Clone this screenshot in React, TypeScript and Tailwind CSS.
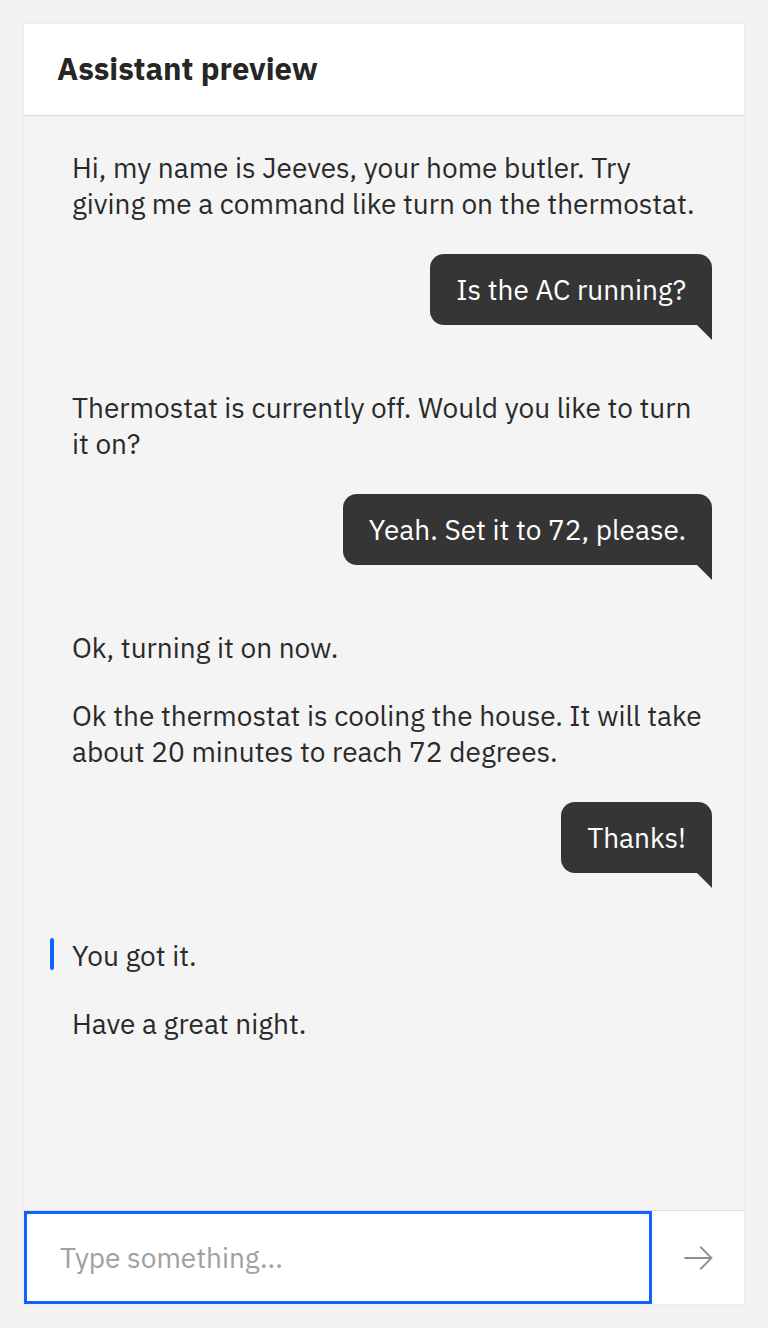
import React from "react";

type Msg = { from: "bot" | "user"; text: string; focus?: boolean };

const messages: Msg[] = [
  { from: "bot", text: "Hi, my name is Jeeves, your home butler. Try giving me a command like turn on the thermostat." },
  { from: "user", text: "Is the AC running?" },
  { from: "bot", text: "Thermostat is currently off. Would you like to turn it on?" },
  { from: "user", text: "Yeah. Set it to 72, please." },
  { from: "bot", text: "Ok, turning it on now." },
  { from: "bot", text: "Ok the thermostat is cooling the house. It will take about 20 minutes to reach 72 degrees." },
  { from: "user", text: "Thanks!" },
  { from: "bot", text: "You got it.", focus: true },
  { from: "bot", text: "Have a great night." },
];

const UserBubble = ({ text }: { text: string }) => (
  <div className="flex justify-end mb-[65px]">
    <div className="relative">
      <div className="bg-[#353535] text-white text-[28px] leading-[36px] px-[26px] pt-[18px] pb-[17px] rounded-t-[14px] rounded-bl-[14px]">
        {text}
      </div>
      <svg className="absolute right-0 -bottom-[15px]" width="15" height="15" viewBox="0 0 15 15">
        <polygon points="0,0 15,0 15,15" fill="#353535" />
      </svg>
    </div>
  </div>
);

const BotText = ({ text, focus }: { text: string; focus?: boolean }) => (
  <div className="relative mb-[32px] pl-[48px] pr-[32px]">
    {focus && <div className="absolute left-[26px] top-0 w-[4px] h-[32px] rounded-full bg-[#0f62fe]" />}
    <p className="text-[28px] leading-[36px] text-[#2a2a2a] max-w-[634px]">{text}</p>
  </div>
);

export default function App() {
  return (
    <div
      className="min-h-[1328px] bg-[#f2f2f2] p-[24px]"
      style={{ fontFamily: '"IBM Plex Sans", "Noto Sans", sans-serif' }}
    >
      <div className="flex flex-col h-[1280px] bg-[#f4f4f4] shadow-[0_0_2px_rgba(0,0,0,0.08)]">
        <div className="h-[92px] bg-white border-b border-[#dcdcdc] flex items-center px-[33px]">
          <h1 className="text-[31px] font-bold text-[#262626]">Assistant preview</h1>
        </div>
        <div className="flex-1 pt-[34px]">
          {messages.map((m, i) =>
            m.from === "user" ? (
              <div key={i} className="pr-[32px]">
                <UserBubble text={m.text} />
              </div>
            ) : (
              <BotText key={i} text={m.text} focus={m.focus} />
            )
          )}
        </div>
        <div className="flex h-[94px] border-t border-[#e0e0e0]">
          <div className="flex-1 bg-white border-[3px] border-[#0f62fe] flex items-center px-[33px]">
            <span className="text-[28px] text-[#a0a0a0]">Type something...</span>
          </div>
          <div className="w-[92px] bg-white flex items-center justify-center">
            <svg width="36" height="36" viewBox="0 0 32 32" fill="none" stroke="#8d8d8d" strokeWidth="1.6">
              <path d="M4 16h24M18 6l10 10-10 10" />
            </svg>
          </div>
        </div>
      </div>
    </div>
  );
}
